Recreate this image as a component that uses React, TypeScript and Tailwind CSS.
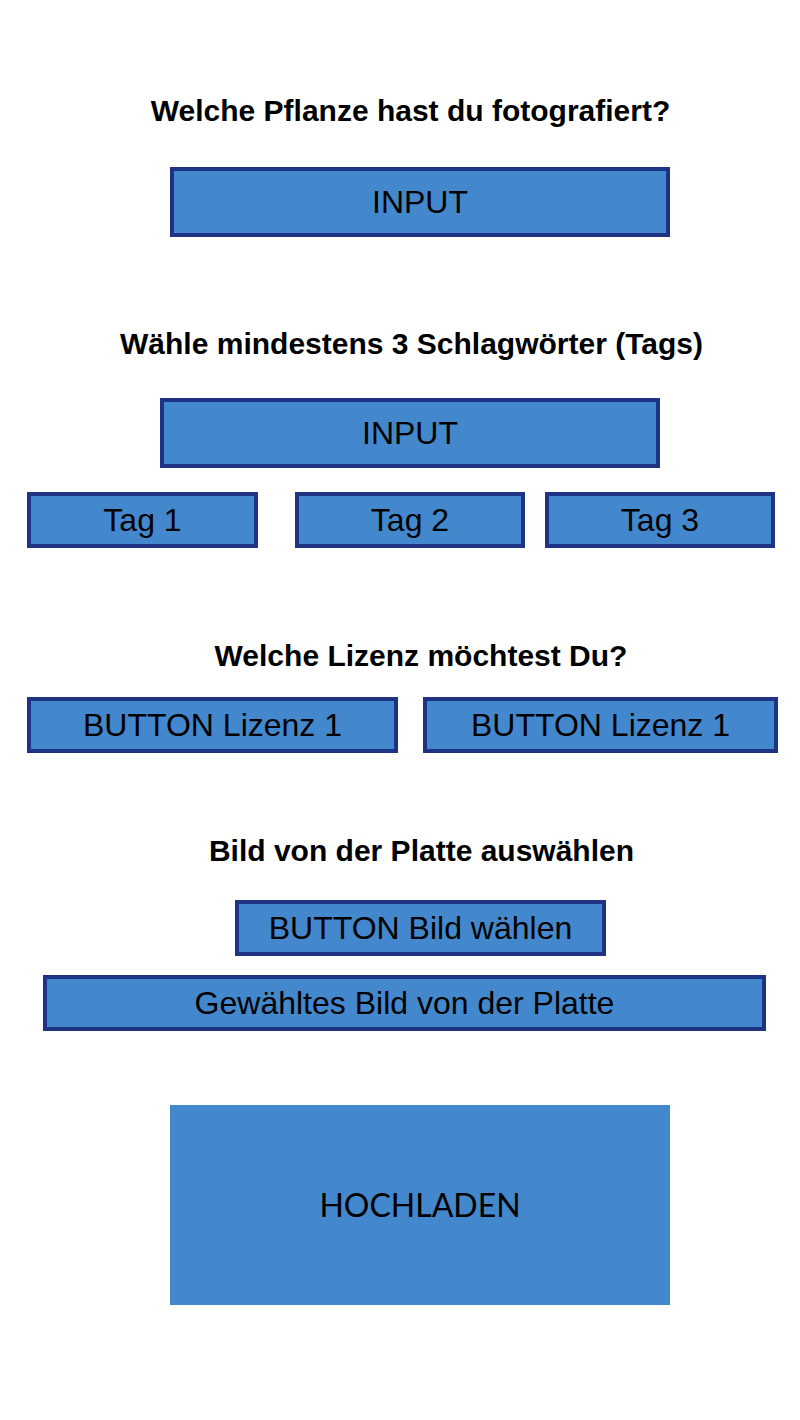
import React from "react";

const box =
  "flex items-center justify-center bg-[#4388cc] border-[4px] border-[#1f3384] text-black text-[32px] leading-none";
const boxFont = { fontFamily: '"Liberation Sans", Arial, sans-serif' };

function Heading({ children, pl, mt }: { children: React.ReactNode; pl: string; mt: string }) {
  return (
    <div className={`flex justify-center ${pl} ${mt}`}>
      <h2
        className="text-[30px] leading-[32px] font-bold text-black whitespace-nowrap"
        style={{ fontFamily: '"Liberation Sans", Arial, sans-serif' }}
      >
        {children}
      </h2>
    </div>
  );
}

export default function App() {
  return (
    <div className="w-[800px] h-[1420px] bg-white flex flex-col" style={boxFont}>
      <Heading pl="pl-[21px]" mt="mt-[95px]">
        Welche Pflanze hast du fotografiert?
      </Heading>
      <div className={`${box} ml-[170px] mt-[40px] w-[500px] h-[70px]`}>INPUT</div>

      <Heading pl="pl-[23px]" mt="mt-[91px]">
        Wähle mindestens 3 Schlagwörter (Tags)
      </Heading>
      <div className={`${box} ml-[160px] mt-[38px] w-[500px] h-[70px]`}>INPUT</div>

      <div className="flex ml-[27px] mt-[24px]">
        <div className={`${box} w-[231px] h-[56px]`}>Tag 1</div>
        <div className={`${box} w-[230px] h-[56px] ml-[37px]`}>Tag 2</div>
        <div className={`${box} w-[230px] h-[56px] ml-[20px]`}>Tag 3</div>
      </div>

      <Heading pl="pl-[42px]" mt="mt-[92px]">
        Welche Lizenz möchtest Du?
      </Heading>
      <div className="flex ml-[27px] mt-[25px]">
        <div className={`${box} w-[371px] h-[56px]`}>BUTTON Lizenz 1</div>
        <div className={`${box} w-[355px] h-[56px] ml-[25px]`}>BUTTON Lizenz 1</div>
      </div>

      <Heading pl="pl-[43px]" mt="mt-[82px]">
        Bild von der Platte auswählen
      </Heading>
      <div className={`${box} ml-[235px] mt-[33px] w-[371px] h-[56px]`}>BUTTON Bild wählen</div>
      <div className={`${box} ml-[43px] mt-[19px] w-[723px] h-[56px]`}>
        Gewähltes Bild von der Platte
      </div>

      <div
        className="ml-[170px] mt-[74px] w-[500px] h-[200px] bg-[#4388cc] flex items-center justify-center text-black text-[32px] leading-none"
        style={{ fontFamily: 'Lato, "Liberation Sans", sans-serif' }}
      >
        HOCHLADEN
      </div>
    </div>
  );
}
